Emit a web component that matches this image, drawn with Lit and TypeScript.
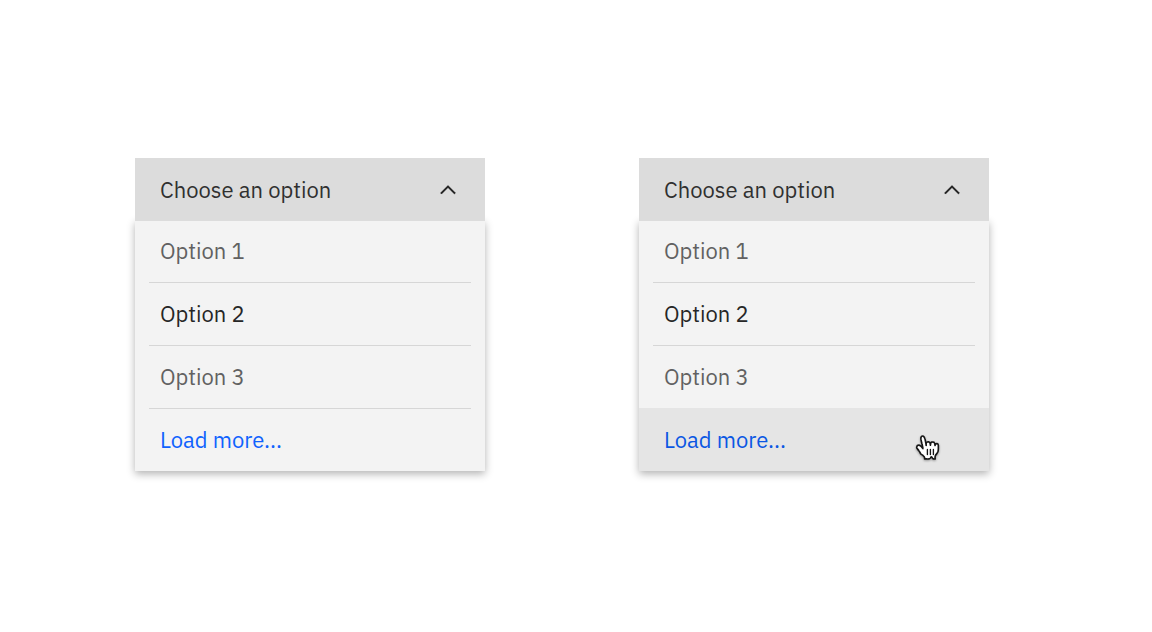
import { LitElement, html, css, svg } from "lit";
import { customElement, property } from "lit/decorators.js";
import { classMap } from "lit/directives/class-map.js";

const chevronUp = svg`<path d="M8 5l5 5-.7.7L8 6.4 3.7 10.7 3 10z" fill="#161616" stroke="#161616" stroke-width=".3" />`;

const pointer = svg`
  <path
    d="m11.3 20.4c-.3-.4-.6-1.1-1.2-2-.3-.5-1.2-1.5-1.5-1.9-.2-.4-.2-.6-.1-1 .1-.6.7-1.1 1.4-1.1.5 0 1 .4 1.4.7.2.2.5.6.7.8.2.2.2.3.4.5.2.3.3.5.2.1-.1-.5-.2-1.3-.4-2.1-.1-.6-.2-.7-.3-1.1-.1-.5-.2-.8-.3-1.3-.1-.3-.2-1.1-.3-1.5-.1-.5-.1-1.4.3-1.8.3-.3.9-.4 1.3-.2.5.3.8 1 .9 1.3.2.5.4 1.2.5 2 .2 1 .5 2.5.5 2.8 0-.4-.1-1.1 0-1.5.1-.3.3-.7.7-.8.3-.1.6-.1.9-.1.3.1.6.3.8.5.4.6.4 1.9.4 1.8.1-.4.1-1.2.3-1.6.1-.2.5-.4.7-.5.3-.1.7-.1 1 0 .2 0 .6.3.7.5.2.3.3 1.3.4 1.7 0 .1.1-.4.3-.7.4-.6 1.8-.8 1.9.6v1.1 1.2c0 .4-.1 1.3-.2 1.7-.1.3-.4 1-.7 1.4 0 0-1.1 1.2-1.2 1.8-.1.6-.1.6-.1 1 0 .4.1.9.1.9 0 0-.8.1-1.2 0-.4-.1-.9-.8-1-1.1-.2-.3-.5-.3-.7 0-.2.4-.7 1.1-1.1 1.1-.7.1-2.1 0-3.1 0 0 0 .2-1-.2-1.4-.3-.3-.8-.8-1.1-1.1z"
    fill="#fff" stroke="#161616" stroke-width="1.1" stroke-linejoin="round" />
  <path d="M19.6 20.7v-3.4M17.6 20.7v-3.5M15.6 17.3v3.4" fill="none" stroke="#161616"
    stroke-width=".9" stroke-linecap="round" />`;

@customElement("option-dropdown")
export class OptionDropdown extends LitElement {
  @property({ type: Boolean }) hovered = false;
  @property({ attribute: false }) options: string[] = ["Option 1", "Option 2", "Option 3"];
  @property({ type: Number }) current = 1;

  static styles = css`
    :host {
      display: block;
      min-width: 0;
    }
    button {
      display: flex;
      align-items: center;
      justify-content: space-between;
      width: 100%;
      height: 62px;
      margin: 0;
      padding: 0 25px;
      border: 0;
      background: none;
      color: #616161;
      font: 22px/28px "IBM Plex Sans", Roboto, sans-serif;
      text-align: left;
      cursor: pointer;
    }
    .trigger {
      position: relative;
      z-index: 1;
      height: 63px;
      background: #dcdcdc;
      color: #303030;
    }
    .chevron {
      width: 24px;
      height: 24px;
    }
    .menu {
      margin: -1px 0 0;
      padding: 0;
      list-style: none;
      background: #f3f3f3;
      box-shadow: 0 3px 8px rgba(0, 0, 0, 0.3);
    }
    .divider {
      height: 1px;
      margin: 0 14px;
      background: #d6d6d6;
    }
    .current {
      color: #262626;
    }
    .more {
      position: relative;
    }
    .more button {
      color: #0f62fe;
    }
    .hovered {
      margin-top: -1px;
      padding-top: 1px;
      background: #e5e5e5;
    }
    .hovered button {
      color: #0b57e3;
    }
    .pointer {
      position: absolute;
      top: 26px;
      right: 49px;
      width: 24px;
      height: 27px;
      overflow: visible;
      filter: drop-shadow(0 1px 1px rgba(0, 0, 0, 0.35));
      pointer-events: none;
    }
  `;

  render() {
    return html`
      <button class="trigger" type="button" aria-expanded="true" aria-controls="menu">
        <span>Choose an option</span>
        <svg class="chevron" viewBox="0 0 16 16" aria-hidden="true">${chevronUp}</svg>
      </button>
      <ul class="menu" id="menu">
        ${this.options.map(
          (label, i) => html`
            <li>
              <button type="button" class=${classMap({ current: i === this.current })}>${label}</button>
              <div class="divider"></div>
            </li>
          `
        )}
        <li class=${classMap({ more: true, hovered: this.hovered })}>
          <button type="button">Load more...</button>
          ${this.hovered
            ? html`<svg class="pointer" viewBox="8 7 16 18" aria-hidden="true">${pointer}</svg>`
            : null}
        </li>
      </ul>
    `;
  }
}

@customElement("app-root")
export class AppRoot extends LitElement {
  static styles = css`
    :host {
      display: block;
      box-sizing: border-box;
      min-height: 100vh;
      background: #fff;
    }
    .page {
      display: grid;
      grid-template-columns: 1fr 1fr;
      column-gap: 154px;
      padding: 158px 163px 48px 135px;
    }
  `;

  render() {
    return html`
      <main class="page">
        <option-dropdown></option-dropdown>
        <option-dropdown hovered></option-dropdown>
      </main>
    `;
  }
}
